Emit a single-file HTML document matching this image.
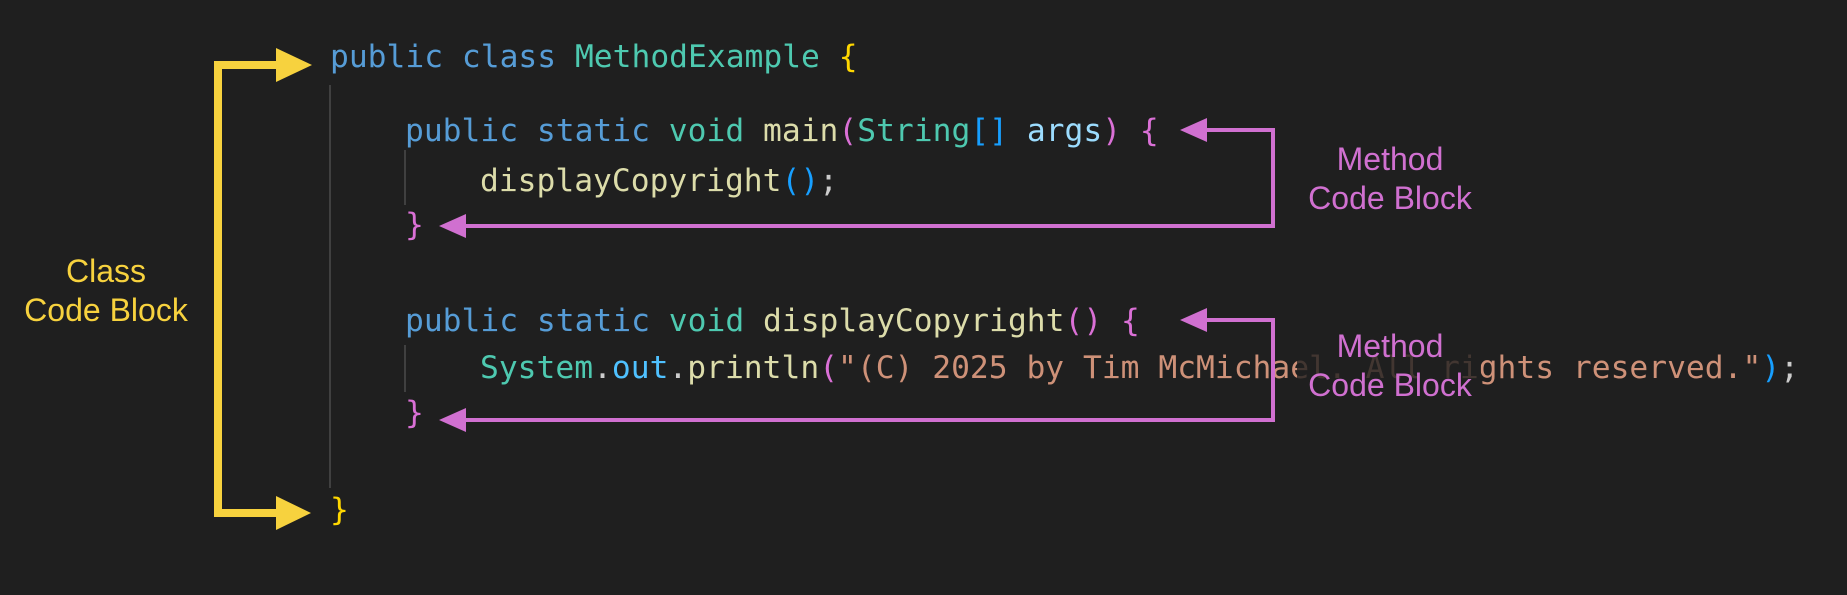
<!DOCTYPE html>
<html><head><meta charset="utf-8"><style>
html,body{margin:0;padding:0;background:#1f1f1f;width:1847px;height:595px;overflow:hidden}
svg{display:block}
.c{font-family:"DejaVu Sans Mono","Liberation Mono",monospace;font-size:31.3px;white-space:pre}
.l{font-family:"Liberation Sans",Arial,sans-serif;font-size:32px}
</style></head><body>
<svg width="1847" height="595" xmlns="http://www.w3.org/2000/svg">
<rect width="1847" height="595" fill="#1f1f1f"/>
<g stroke="#404040" stroke-width="2">
<line x1="330" y1="85" x2="330" y2="488"/>
<line x1="405" y1="150" x2="405" y2="205"/>
<line x1="405" y1="345" x2="405" y2="392"/>
</g>
<g class="c">
<text x="330" y="67"><tspan fill="#569cd6">public class </tspan><tspan fill="#4ec9b0">MethodExample </tspan><tspan fill="#ffd700">{</tspan></text>
<text x="405" y="141"><tspan fill="#569cd6">public static </tspan><tspan fill="#4ec9b0">void </tspan><tspan fill="#dcdcaa">main</tspan><tspan fill="#da70d6">(</tspan><tspan fill="#4ec9b0">String</tspan><tspan fill="#179fff">[]</tspan><tspan fill="#9cdcfe"> args</tspan><tspan fill="#da70d6">) {</tspan></text>
<text x="480" y="191"><tspan fill="#dcdcaa">displayCopyright</tspan><tspan fill="#179fff">()</tspan><tspan fill="#cccccc">;</tspan></text>
<text x="405" y="235" fill="#da70d6">}</text>
<text x="405" y="331"><tspan fill="#569cd6">public static </tspan><tspan fill="#4ec9b0">void </tspan><tspan fill="#dcdcaa">displayCopyright</tspan><tspan fill="#da70d6">() {</tspan></text>
<text x="480" y="378"><tspan fill="#4ec9b0">System</tspan><tspan fill="#cccccc">.</tspan><tspan fill="#4fc1ff">out</tspan><tspan fill="#cccccc">.</tspan><tspan fill="#dcdcaa">println</tspan><tspan fill="#da70d6">(</tspan><tspan fill="#ce9178">"(C) 2025 by Tim McMichael. All rights reserved."</tspan><tspan fill="#179fff">)</tspan><tspan fill="#cccccc">;</tspan></text>
<text x="405" y="423" fill="#da70d6">}</text>
<text x="330" y="520" fill="#ffd700">}</text>
</g>
<rect x="1297" y="352" width="184" height="44" fill="#1f1f1f" opacity="0.8"/>
<g fill="none" stroke="#f7d23e" stroke-width="8">
<polyline points="278,65 218,65 218,513 278,513"/>
</g>
<g fill="#f7d23e">
<polygon points="276,48 312,65 276,82"/>
<polygon points="276,496 311,513 276,530"/>
</g>
<g fill="none" stroke="#d070d0" stroke-width="4">
<polyline points="1205,130 1273,130 1273,226 465,226"/>
<polyline points="1205,320 1273,320 1273,420 465,420"/>
</g>
<g fill="#d070d0">
<polygon points="1180,130 1207,118 1207,142"/>
<polygon points="439,226 466,214 466,238"/>
<polygon points="1180,320 1207,308 1207,332"/>
<polygon points="439,420 466,408 466,432"/>
</g>
<g class="l" fill="#f7d23e" text-anchor="middle">
<text x="106" y="282">Class</text>
<text x="106" y="321">Code Block</text>
</g>
<g class="l" fill="#d070d0" text-anchor="middle">
<text x="1390" y="170">Method</text>
<text x="1390" y="209">Code Block</text>
<text x="1390" y="357">Method</text>
<text x="1390" y="396">Code Block</text>
</g>
</svg>
</body></html>
